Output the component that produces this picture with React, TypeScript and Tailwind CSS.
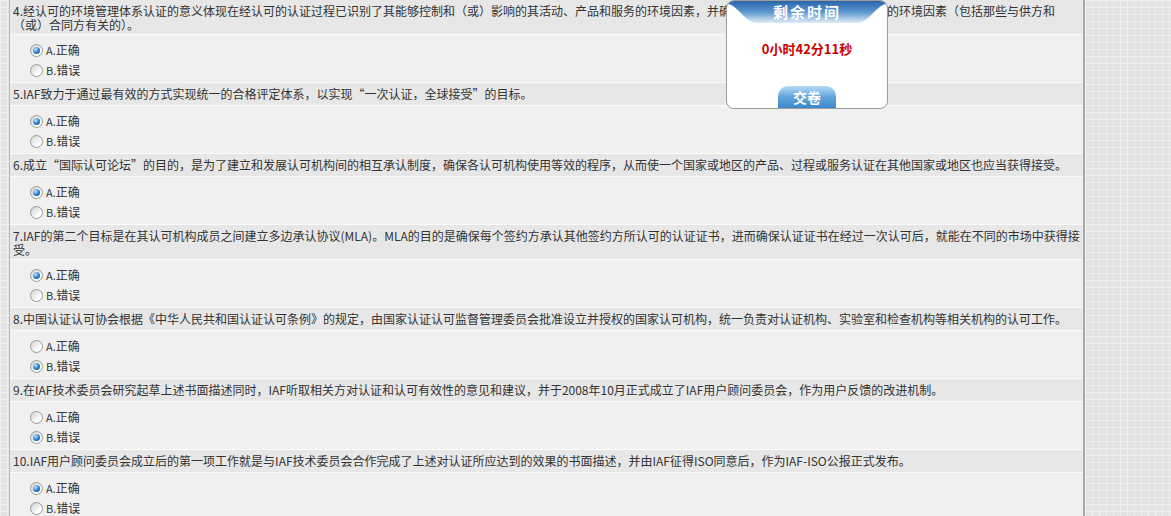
import React from "react";

interface Question {
    no: number;
    text: string;
    answer: "A" | "B";
}

const questions: Question[] = [
    { no: 4, text: "经认可的环境管理体系认证的意义体现在经认可的认证过程已识别了其能够控制和（或）影响的其活动、产品和服务的环境因素，并确定了其中能够控制和施加影响的环境因素（包括那些与供方和（或）合同方有关的）。", answer: "A" },
    { no: 5, text: "IAF致力于通过最有效的方式实现统一的合格评定体系，以实现“一次认证，全球接受”的目标。", answer: "A" },
    { no: 6, text: "成立“国际认可论坛”的目的，是为了建立和发展认可机构间的相互承认制度，确保各认可机构使用等效的程序，从而使一个国家或地区的产品、过程或服务认证在其他国家或地区也应当获得接受。", answer: "A" },
    { no: 7, text: "IAF的第二个目标是在其认可机构成员之间建立多边承认协议(MLA)。MLA的目的是确保每个签约方承认其他签约方所认可的认证证书，进而确保认证证书在经过一次认可后，就能在不同的市场中获得接受。", answer: "A" },
    { no: 8, text: "中国认证认可协会根据《中华人民共和国认证认可条例》的规定，由国家认证认可监督管理委员会批准设立并授权的国家认可机构，统一负责对认证机构、实验室和检查机构等相关机构的认可工作。", answer: "B" },
    { no: 9, text: "在IAF技术委员会研究起草上述书面描述同时，IAF听取相关方对认证和认可有效性的意见和建议，并于2008年10月正式成立了IAF用户顾问委员会，作为用户反馈的改进机制。", answer: "B" },
    { no: 10, text: "IAF用户顾问委员会成立后的第一项工作就是与IAF技术委员会合作完成了上述对认证所应达到的效果的书面描述，并由IAF征得ISO同意后，作为IAF-ISO公报正式发布。", answer: "A" },
];

const Radio: React.FC<{ checked: boolean }> = ({ checked }) => (
    <span className="relative inline-flex h-[13px] w-[13px] shrink-0 items-center justify-center rounded-full border border-[#9a9a9a] bg-[linear-gradient(135deg,#d4d4d4,#ffffff_75%)]">
        {checked && (
            <span className="h-[7px] w-[7px] rounded-full bg-[radial-gradient(circle_at_35%_30%,#bfe3ff,#2d7fd0_55%,#0b3f7f)]"></span>
        )}
    </span>
);

const Option: React.FC<{ label: string; text: string; checked: boolean }> = ({ label, text, checked }) => (
    <label className="flex h-[20px] items-center">
        <Radio checked={checked} />
        <span className="ml-[3px] text-[11px]">{label}.</span>
        <span className="text-[12px]">{text}</span>
    </label>
);

const TimerPanel: React.FC = () => (
    <div className="absolute left-[726px] top-0 flex h-[109px] w-[162px] flex-col items-center overflow-hidden rounded-[8px] border border-[#9c9c9c] bg-white">
        <div className="relative h-[24px] w-full">
            <svg className="absolute inset-0" width="160" height="24" viewBox="0 0 160 24">
                <defs>
                    <linearGradient id="hdr" x1="0" y1="0" x2="0" y2="1">
                        <stop offset="0" stopColor="#2a65ab" />
                        <stop offset="0.5" stopColor="#5c98cf" />
                        <stop offset="1" stopColor="#e2edf7" />
                    </linearGradient>
                </defs>
                <path d="M0,0 H160 V3 C150,3 142,22 130,22 H30 C18,22 10,3 0,3 Z" fill="url(#hdr)" />
            </svg>
            <div className="relative text-center text-[15px] font-bold leading-[22px] tracking-[2px] text-white">剩余时间</div>
        </div>
        <div className="mt-[16px] text-[13px] font-bold leading-[16px] text-[#cc0000]">0小时42分11秒</div>
        <button className="mt-auto h-[22px] w-[58px] rounded-t-[10px] bg-[linear-gradient(#b8dbf5,#62a4dc_50%,#3c87cd)] text-[14px] font-bold leading-[22px] text-white">交卷</button>
    </div>
);

export default function App() {
    return (
        <div
            lang="zh-CN"
            className="relative min-h-screen bg-[#e3e3e3] bg-[linear-gradient(#efefef_1px,transparent_1px),linear-gradient(90deg,#efefef_1px,transparent_1px)] bg-[size:7px_7px] text-[#333] [font-family:'Noto_Sans_CJK_SC',sans-serif]"
        >
            <div className="ml-[9px] w-[1076px] border-l border-r-2 border-l-[#b8b8b8] border-r-[#a9a9a9]">
                {questions.map((q) => (
                    <div key={q.no}>
                        <div className="min-h-[23px] border-b border-[#fbfbfb] bg-[#e7e7e7] px-[3px] pb-[2px] pt-[4px] text-[12px] leading-[14px]">
                            {q.no}.{q.text}
                        </div>
                        <div className="border-b border-[#fbfbfb] bg-[#f0f0f0] pb-[2px] pl-[20px] pt-[5px]">
                            <Option label="A" text="正确" checked={q.answer === "A"} />
                            <Option label="B" text="错误" checked={q.answer === "B"} />
                        </div>
                    </div>
                ))}
            </div>
            <TimerPanel />
        </div>
    );
}
